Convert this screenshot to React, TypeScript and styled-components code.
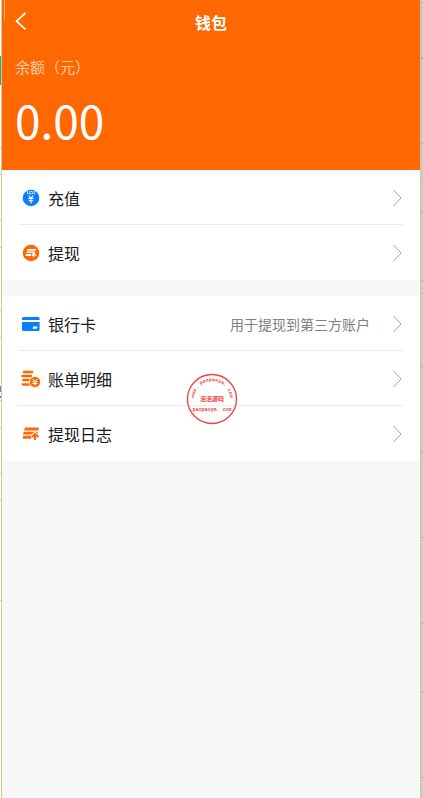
import React from "react";
import styled, { createGlobalStyle } from "styled-components";

const Global = createGlobalStyle`
  * { box-sizing: border-box; }
  html, body { margin: 0; }
  body {
    font-family: "Noto Sans CJK SC", sans-serif;
    color: #1a1a1a;
    background: #c8c8c8;
  }
  button { font: inherit; color: inherit; border: 0; background: none; padding: 0; cursor: pointer; }
`;

const Frame = styled.div`
  display: grid;
  grid-template-columns: 1px minmax(0, 1fr) 2px;
  min-height: 100vh;
`;

const Sheet = styled.div`
  position: relative;
  background: #fffff6;
`;

const Mark = styled.span<{ $top: number; $height?: number; $color: string }>`
  position: absolute;
  left: 0;
  right: 0;
  top: ${(p) => p.$top}px;
  height: ${(p) => p.$height ?? 1}px;
  background: ${(p) => p.$color};
`;

const Margin = styled.div`
  position: relative;
  background: #cacaca;
`;

const Phone = styled.main`
  position: relative;
  background: #f7f7f7;
  border-left: 1px solid #d3c99c;
  border-right: 1px solid #cfc79f;
`;

const Header = styled.header`
  position: relative;
  background: #ff6700;
  color: #fff;
  padding-bottom: 22px;
`;

const Caret = styled.span`
  position: absolute;
  left: 2px;
  top: 0;
  width: 1px;
  height: 20px;
  background: #d9b98c;
`;

const NavBar = styled.div`
  display: grid;
  grid-template-columns: 44px 1fr 44px;
  align-items: center;
  height: 44px;
`;

const Back = styled.button`
  display: flex;
  align-items: center;
  height: 44px;
  padding-left: 12px;
`;

const Title = styled.h1`
  margin: 0;
  font-size: 16px;
  line-height: 24px;
  font-weight: 700;
  text-align: center;
`;

const Balance = styled.section`
  padding: 12px 13px 0;
`;

const BalanceLabel = styled.div`
  font-size: 15px;
  line-height: 22px;
  color: #ffcaa3;
`;

const Amount = styled.div`
  margin-top: 12px;
  font-size: 46px;
  line-height: 58px;
`;

const List = styled.ul`
  list-style: none;
  margin: 0 0 16px;
  padding: 0;
  background: #fff;
`;

const Item = styled.li`
  padding: 0 17px 0 16px;
  &:not(:last-child) > button { border-bottom: 1px solid #ebebeb; padding-top: 1px; }
`;

const Row = styled.button`
  display: flex;
  align-items: center;
  width: 100%;
  height: 55px;
  text-align: left;
`;

const RowIcon = styled.span`
  display: flex;
  width: 26px;
  margin-right: 4px;
  padding-left: 3px;
`;

const RowText = styled.span`
  flex: 1;
  font-size: 16px;
  line-height: 24px;
`;

const Note = styled.span`
  margin-right: 20px;
  font-size: 14px;
  line-height: 24px;
  color: #808080;
`;

const Stamp = styled.svg`
  position: absolute;
  left: 184px;
  top: 373px;
`;

const Chevron = () => (
  <svg width="13" height="18" viewBox="0 0 13 18" fill="none" stroke="#a0a6aa" aria-hidden="true">
    <path d="M3.500 1 11 9l-7.500 8" />
  </svg>
);

const icons = {
  recharge: (
    <svg width="20" height="18" viewBox="0 0 20 18" fill="none">
      <circle cx="10" cy="9" r="8.300" fill="#0b7dff" />
      <path d="M6.500 1.500v3.300h7V1.500M8.500 4V2.500h3V4" stroke="#b8dcff" />
      <path d="m7.800 7 2.200 2 2.200-2M7.300 9.500h5.400M7.800 11.800h4.400M10 9v5.500" stroke="#fff" strokeWidth="1.100" />
    </svg>
  ),
  withdraw: (
    <svg width="20" height="18" viewBox="0 0 20 18" fill="none">
      <circle cx="10" cy="9" r="8.300" fill="#ff6700" />
      <path d="M6.500 5h8.500l-.6 1.700H5.900zM5.500 7.500h8.800l-.6 1.600H4.900zM5 10h5v2H4.500z" fill="#fff" />
      <path d="M12.700 13V9.800m-2 1.700 2-2 2.300 2" stroke="#fff" strokeWidth="1.300" />
    </svg>
  ),
  card: (
    <svg width="20" height="18" viewBox="0 0 20 18">
      <path d="M2.500 2h14.600a1.500 1.500 0 0 1 1.500 1.500V5H1V3.500A1.500 1.500 0 0 1 2.500 2zM1 7h17.600v7.500a1.500 1.500 0 0 1-1.500 1.500H2.500A1.500 1.500 0 0 1 1 14.500z" fill="#0b7dff" />
      <path d="M12.200 11.500h4.300l-.7 2.300h-4.300z" fill="#fff" />
    </svg>
  ),
  bill: (
    <svg width="20" height="18" viewBox="0 0 20 18" fill="none">
      <path d="M3 2h8M1.500 6h8.500M2.500 10h6.500M2 14.500h7" stroke="#ff6700" strokeWidth="2.600" strokeLinecap="round" />
      <circle cx="14" cy="12" r="5.600" fill="#ff6700" stroke="#fff" strokeWidth=".8" />
      <path d="m11.700 9 2.300 2.500L16.300 9M11.500 11.700h5M11.500 13.500h5M14 11.500v4" stroke="#fff" />
    </svg>
  ),
  log: (
    <svg width="20" height="18" viewBox="0 0 20 18" fill="none">
      <path d="M4 2.500h14l-.8 3H3zM2.800 6.700h14.500l-.8 2.800H2zM2 10.700h8.300v3H2z" fill="#ff6700" />
      <path d="M14 14V9m-2.700 2.500L14 8.800l3 2.700" stroke="#fff" strokeWidth="3.800" />
      <path d="M14 15V9.500m-3 2.500 3-3 3.500 3" stroke="#ff6700" strokeWidth="2" />
    </svg>
  ),
};

type Entry = { icon: keyof typeof icons; text: string; note?: string };

const groups: Entry[][] = [
  [
    { icon: "recharge", text: "充值" },
    { icon: "withdraw", text: "提现" },
  ],
  [
    { icon: "card", text: "银行卡", note: "用于提现到第三方账户" },
    { icon: "bill", text: "账单明细" },
    { icon: "log", text: "提现日志" },
  ],
];

const leftTicks = [147, 174, 220, 247, 310, 337, 400, 427, 473, 500, 600];
const rightTicks = [2, 57, 58, 143, 212, 280, 293, 366, 451, 537, 623, 691, 777];

export default function App() {
  return (
    <>
      <Global />
      <Frame>
        <Sheet>
          <Mark $top={56} $height={29} $color="#36a866" />
          {leftTicks.map((y) => <Mark key={y} $top={y} $color="#d3c99c" />)}
          <Mark $top={386} $height={6} $color="#4a91e8" />
          <Mark $top={396} $height={2} $color="#2584e8" />
        </Sheet>
        <Phone>
          <Header>
            <Caret />
            <NavBar>
              <Back type="button" aria-label="返回">
                <svg width="14" height="20" viewBox="0 0 14 20" fill="none" stroke="#fff" strokeWidth="1.700">
                  <path d="M11.500 1 2.500 9.200l9 8.300" />
                </svg>
              </Back>
              <Title>钱包</Title>
            </NavBar>
            <Balance>
              <BalanceLabel>余额（元）</BalanceLabel>
              <Amount>0.00</Amount>
            </Balance>
          </Header>
          {groups.map((group) => (
            <List key={group[0].text}>
              {group.map((entry) => (
                <Item key={entry.text}>
                  <Row type="button">
                    <RowIcon aria-hidden="true">{icons[entry.icon]}</RowIcon>
                    <RowText>{entry.text}</RowText>
                    {entry.note && <Note>{entry.note}</Note>}
                    <Chevron />
                  </Row>
                </Item>
              ))}
            </List>
          ))}
          <Stamp width="52" height="52" viewBox="0 0 52 52" fill="#f03c3c" fontFamily="Liberation Mono, monospace" fontWeight="700" textAnchor="middle">
            <defs>
              <path id="stamp-arc" d="M8 26a18 18 0 0 1 36 0" />
            </defs>
            <circle cx="26" cy="26" r="24.500" fill="none" stroke="#f04040" strokeWidth="1.300" />
            <text fontSize="5">
              <textPath href="#stamp-arc" startOffset="50%">www. paopaoym. com</textPath>
            </text>
            <text x="26" y="28" fontSize="6" fontFamily="Noto Sans CJK SC, sans-serif">泡泡源码</text>
            <text x="26" y="38" fontSize="5">paopaoym. com</text>
          </Stamp>
        </Phone>
        <Margin>
          {rightTicks.map((y) => <Mark key={y} $top={y} $color="#aaa" />)}
        </Margin>
      </Frame>
    </>
  );
}
